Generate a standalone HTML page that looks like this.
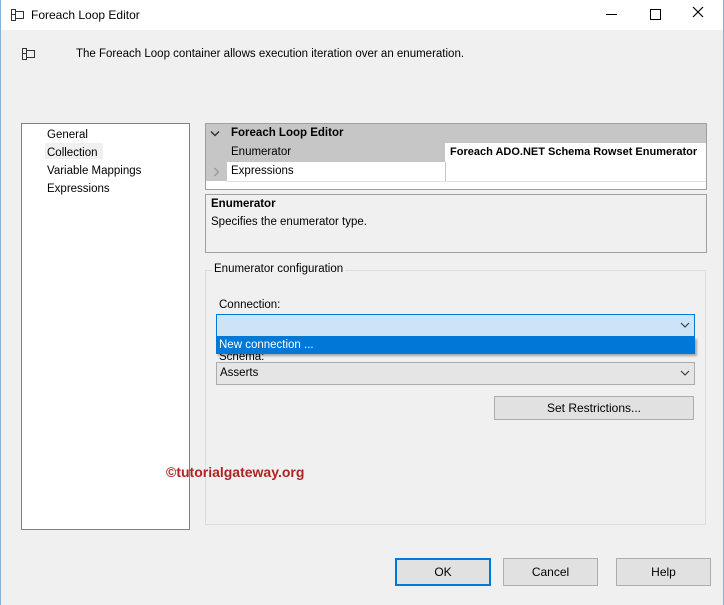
<!DOCTYPE html>
<html><head><style>
body{margin:0;width:724px;height:605px;background:#f0f0f0;font-family:"Liberation Sans",sans-serif;font-size:11.5px;color:#000;position:relative;overflow:hidden}
.a{position:absolute}
.btn{position:absolute;background:#e1e1e1;border:1px solid #adadad;box-sizing:border-box;text-align:center;font-size:12px}
.cb{position:absolute;background:#e5e5e5;border:1px solid #acacac;box-sizing:border-box}
</style></head><body>
<div class="a" style="left:0;top:0;width:724px;height:30px;background:#fff"></div>
<div class="a" style="left:0;top:0;width:1px;height:605px;background:#8ab0d8"></div>
<div class="a" style="right:0;top:0;width:1px;height:605px;background:#8ab0d8"></div>
<svg class="a" style="left:10px;top:8px" width="16" height="14"><path d="M1.5 1.5h4v11h-4zM1.5 6.5h4M5.5 3.5h8v7h-8" fill="none" stroke="#333"/></svg>
<div class="a" style="left:31px;top:8px;font-size:12px">Foreach Loop Editor</div>
<div class="a" style="left:606px;top:14px;width:11px;height:1px;background:#000"></div>
<div class="a" style="left:650px;top:9px;width:9px;height:9px;border:1px solid #000"></div>
<svg class="a" style="left:692px;top:6px" width="12" height="12"><path d="M1 1L11 11M11 1L1 11" stroke="#000" stroke-width="1.2"/></svg>
<svg class="a" style="left:21px;top:47px" width="16" height="14"><path d="M1.5 1.5h4v11h-4zM1.5 6.5h4M5.5 3.5h8v7h-8" fill="none" stroke="#333"/></svg>
<div class="a" style="left:76px;top:48px;font-size:11.5px">The Foreach Loop container allows execution iteration over an enumeration.</div>

<div class="a" style="left:21px;top:123px;width:169px;height:407px;background:#fff;border:1px solid #828282;box-sizing:border-box"></div>
<div class="a" style="left:45px;top:143px;width:58px;height:16px;background:#f0f0f0"></div>
<div class="a" style="left:47px;top:126px;line-height:18px">General<br>Collection<br>Variable Mappings<br>Expressions</div>

<div class="a" style="left:205px;top:123px;width:502px;height:67px;background:#fff;border:1px solid #a0a0a0;box-sizing:border-box"></div>
<div class="a" style="left:206px;top:124px;width:500px;height:19px;background:#c6c6c6"></div>
<div class="a" style="left:206px;top:143px;width:21px;height:38px;background:#c6c6c6"></div>
<div class="a" style="left:227px;top:143px;width:218px;height:19px;background:#c6c6c6"></div>
<div class="a" style="left:445px;top:162px;width:1px;height:19px;background:#c6c6c6"></div>
<div class="a" style="left:227px;top:181px;width:479px;height:1px;background:#e0e0e0"></div>
<svg class="a" style="left:210px;top:130px" width="10" height="7"><path d="M1 1.5L5 5.5L9 1.5" fill="none" stroke="#333" stroke-width="1.5"/></svg>
<svg class="a" style="left:213px;top:167px" width="7" height="10"><path d="M1.5 1L5.5 5L1.5 9" fill="none" stroke="#999" stroke-width="1.3"/></svg>
<div class="a" style="left:231px;top:127px;font-weight:bold">Foreach Loop Editor</div>
<div class="a" style="left:231px;top:146px">Enumerator</div>
<div class="a" style="left:450px;top:146px;font-weight:bold;white-space:nowrap;width:256px;overflow:hidden;font-size:11px">Foreach ADO.NET Schema Rowset Enumerator</div>
<div class="a" style="left:231px;top:165px">Expressions</div>

<div class="a" style="left:205px;top:194px;width:502px;height:59px;border:1px solid #a0a0a0;box-sizing:border-box"></div>
<div class="a" style="left:211px;top:198px;font-weight:bold">Enumerator</div>
<div class="a" style="left:211px;top:216px">Specifies the enumerator type.</div>

<div class="a" style="left:205px;top:270px;width:501px;height:255px;border:1px solid #dcdcdc;box-sizing:border-box"></div>
<div class="a" style="left:212px;top:263px;background:#f0f0f0;padding:0 2px">Enumerator configuration</div>
<div class="a" style="left:219px;top:299px">Connection:</div>
<div class="a" style="left:219px;top:354px;width:100px;height:6px;overflow:hidden"><div style="margin-top:-3px">Schema:</div></div>
<div class="cb" style="left:216px;top:362px;width:479px;height:23px"></div>
<div class="a" style="left:220px;top:367px">Asserts</div>
<svg class="a" style="left:680px;top:370px" width="10" height="7"><path d="M1 1L5 5L9 1" fill="none" stroke="#333" stroke-width="1.1"/></svg>
<div class="cb" style="left:216px;top:314px;width:479px;height:23px;background:#cce4f7;border-color:#0078d7"></div>
<svg class="a" style="left:680px;top:322px" width="10" height="7"><path d="M1 1L5 5L9 1" fill="none" stroke="#333" stroke-width="1.1"/></svg>
<div class="a" style="left:216px;top:337px;width:479px;height:17px;background:#0078d7;box-shadow:2px 2px 2px rgba(0,0,0,.3)"></div>
<div class="a" style="left:219px;top:339px;color:#fff">New connection ...</div>

<div class="btn" style="left:494px;top:396px;width:200px;height:24px;line-height:22px">Set Restrictions...</div>
<div class="a" style="left:166px;top:464px;color:#b22222;font-weight:bold;font-size:14px">©tutorialgateway.org</div>

<div class="btn" style="left:395px;top:558px;width:96px;height:28px;line-height:24px;border:2px solid #0078d7">OK</div>
<div class="btn" style="left:503px;top:558px;width:95px;height:28px;line-height:26px">Cancel</div>
<div class="btn" style="left:616px;top:558px;width:95px;height:28px;line-height:26px">Help</div>
</body></html>
